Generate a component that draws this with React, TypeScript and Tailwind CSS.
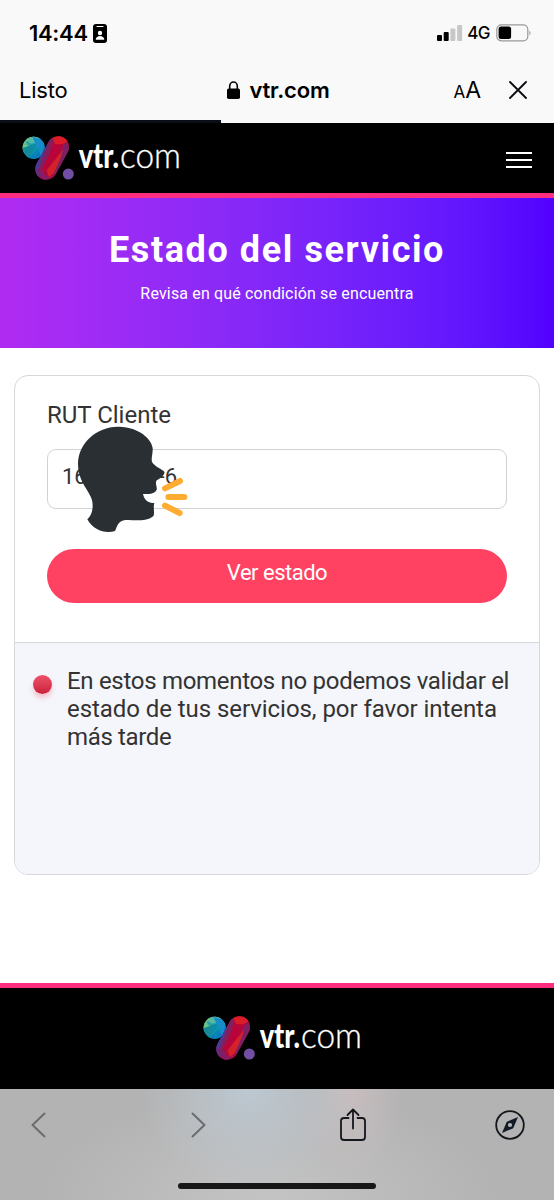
import { useId, type FC } from "react";

const Logo: FC = () => {
  const id = useId();
  return (
    <svg viewBox="60 50 489 141" className="h-[47px] w-[163px]">
      <defs>
        <clipPath id={`${id}-ball`}>
          <circle cx="101" cy="88" r="33" />
        </clipPath>
        <clipPath id={`${id}-pill`}>
          <rect x="124" y="49" width="65" height="140" rx="32.5" transform="rotate(29 156.5 119)" />
        </clipPath>
      </defs>
      <g clipPath={`url(#${id}-ball)`}>
        <path d="M60 50h90v80H60z" fill="#16a6c4" />
        <path d="M60 50h48L84 91 60 104z" fill="#79c77b" />
        <path d="M96 50 70 82 108 72 124 55z" fill="#55b9a0" />
        <path d="M66 90 118 72 84 124z" fill="#148b9b" />
        <path d="m84 121 50-53 4 42-25 18z" fill="#087abf" />
        <path d="m97 55 28 62 10-50z" fill="#168cc8" />
        <path d="m75 66 46 25-18 28z" fill="#078fab" opacity=".6" />
      </g>
      <g clipPath={`url(#${id}-pill)`}>
        <path d="M95 45h125v150H95z" fill="#b00a3f" />
        <path d="M95 190V100l52-50 12 12-47 128z" fill="#5a2f86" />
        <path d="m128 72 18-14 2 26-34 70-10-8z" fill="#4b3a94" />
        <path d="m150 58 12 2-36 118-14-18z" fill="#82205f" />
        <path d="m152 50 42-4 12 22-36 18z" fill="#dc1c26" />
        <path d="m164 78 22 0-26 84-36-8z" fill="#b90439" />
        <path d="m196 72 14 12-4 26-40 66-8-26z" fill="#7c1f63" />
        <path d="m190 92-8 26-20 46-16 12-6-20z" fill="#d3222a" />
        <path d="m112 158 40 20-22 12z" fill="#7a2070" opacity=".8" />
      </g>
      <circle cx="205" cy="167" r="16.5" fill="#714da3" />
      <text y="150" className="fill-white font-[Lato,sans-serif]">
        <tspan x="236" textLength="121" lengthAdjust="spacingAndGlyphs" className="text-[100px] font-black">
          vtr.
        </tspan>
        <tspan
          x="360"
          textLength="183"
          lengthAdjust="spacingAndGlyphs"
          className="stroke-white stroke-[1] text-[104px] font-light">
          com
        </tspan>
      </text>
    </svg>
  );
};

const StatusBar: FC = () => (
  <div className="flex h-[66px] items-center justify-between pr-[22px] pl-[29px]">
    <div className="flex items-center gap-[5px]">
      <span className="text-[22px] font-semibold tracking-[-0.3px]">14:44</span>
      <svg viewBox="0 0 14 19" className="h-[19px] w-[14px]">
        <rect width="14" height="19" rx="3" />
        <path d="M4 2.5h6" stroke="#fff" strokeWidth="1.2" strokeLinecap="round" />
        <circle cx="7" cy="9" r="2.2" fill="#fff" />
        <path d="M2.7 15.7c.3-5 8.3-5 8.6 0z" fill="#fff" />
      </svg>
    </div>
    <div className="flex items-center">
      <svg viewBox="0 0 26 16" className="mr-1 h-4 w-[26px]">
        <rect y="10" width="5" height="6" rx="1" />
        <rect x="6.7" y="7" width="5" height="9" rx="1" />
        <rect x="13.4" y="3.5" width="5" height="12.5" rx="1" fill="#c7c7c7" />
        <rect x="20.1" width="5" height="16" rx="1" fill="#c7c7c7" />
      </svg>
      <span className="mt-[2px] mr-[6px] text-[17px] font-medium tracking-[-0.5px]">4G</span>
      <svg viewBox="0 0 36 18" className="h-[18px] w-9">
        <rect x=".8" y=".8" width="31" height="16" rx="4.5" fill="none" stroke="#999" strokeWidth="1.2" />
        <rect x="2.6" y="2.6" width="12.5" height="12.5" rx="2.5" />
        <path d="M33.5 6.5q2 2.5 0 5z" fill="#888" />
      </svg>
    </div>
  </div>
);

const AddressBar: FC = () => (
  <div className="relative grid h-[57px] grid-cols-[1fr_auto_1fr] items-center pr-[27px] pb-[9px] pl-[19px]">
    <span className="text-[22px] tracking-[-0.2px]">Listo</span>
    <div className="ml-[11px] flex items-center gap-[9px]">
      <svg viewBox="0 0 13 18" className="h-[18px] w-[13px]">
        <rect y="7.5" width="13" height="10.5" rx="1.8" />
        <path d="M2.7 8V5.2a3.8 4.2 0 0 1 7.6 0V8" fill="none" stroke="#000" strokeWidth="1.6" />
      </svg>
      <span className="text-[22px] font-semibold tracking-[-0.2px]">vtr.com</span>
    </div>
    <div className="flex items-center justify-end gap-[28px]">
      <span className="flex items-baseline">
        <span className="text-[17px]">A</span>
        <span className="text-[23px]">A</span>
      </span>
      <svg viewBox="0 0 18 18" className="size-[18px]">
        <path d="m1 1 16 16M17 1 1 17" stroke="#0a0a10" strokeWidth="1.8" strokeLinecap="round" />
      </svg>
    </div>
    <div className="absolute bottom-0 left-0 h-[3px] w-[221px] bg-[#0b0d18]" />
  </div>
);

const SpeakingHead: FC = () => (
  <svg viewBox="228 180 342 330" className="absolute top-[49px] left-[61px] h-[110px] w-[114px]">
    <path
      d="M357 185C419 187 454 222 458 249C459 265 453 277 456 291C465 305 484 312 492 319Q496 325 488 333C481 342 474 342 469 347C465 358 472 365 470 374C464 386 447 388 429 387C434 410 451 415 463 414C459 427 464 440 461 452C449 463 435 465 417 466C393 467 370 460 357 474C349 483 349 492 345 498C317 508 279 495 262 463C276 451 280 430 277 410C271 376 234 355 234 294C236 233 292 183 357 185Z"
      fill="#292f33"
    />
    <path d="m495 370 45-22M505 396h48M495 422l44 22" fill="none" stroke="#ffac33" strokeWidth="18" strokeLinecap="round" />
  </svg>
);

const ServiceCard: FC = () => (
  <section className="relative mx-[14px] mt-[27px] flex h-[500px] flex-col overflow-hidden rounded-[14px] border border-[#d5d7dc] bg-white text-[#333]">
    <div className="flex h-[267px] flex-col border-b border-[#d5d7dc] px-8 pt-[23px]">
      <label className="h-[50px] text-[24px] leading-[32px]">RUT Cliente</label>
      <div className="flex h-[60px] shrink-0 items-center justify-between rounded-[9px] border border-[#d0d2d5] pr-[329px] pb-[6px] pl-[14px] text-[22px]">
        <span>16</span>
        <span>-6</span>
      </div>
      <button className="mt-10 h-[54px] shrink-0 rounded-full bg-[#ff4262] pb-[7px] text-[22px] tracking-[-0.5px] text-white">
        Ver estado
      </button>
    </div>
    <div className="flex flex-1 gap-[15px] bg-[#f5f6fb] pt-[24px] pl-[18px]">
      <span className="mt-[8px] size-[19px] shrink-0 rounded-full bg-linear-to-b from-[#f05268] to-[#c81e3d] shadow-[0_4px_5px_#ef8f9e80]" />
      <p className="flex flex-col text-[24px] leading-[28px] whitespace-nowrap">
        <span className="tracking-[-0.3px]">En estos momentos no podemos validar el</span>
        <span className="tracking-[-0.06px]">estado de tus servicios, por favor intenta</span>
        <span className="tracking-[-0.35px]">más tarde</span>
      </p>
    </div>
    <SpeakingHead />
  </section>
);

const BottomBar: FC = () => (
  <div className="flex h-[111px] flex-col items-center justify-between bg-[#b3b3b3] bg-[radial-gradient(ellipse_110px_100px_at_250px_0px,#bdc8d1,transparent),radial-gradient(ellipse_55px_90px_at_350px_0px,#c8bdbf,transparent),radial-gradient(ellipse_230px_110px_at_270px_111px,#c4c4c4,transparent)] pb-[11px]">
    <div className="flex h-[72px] w-full items-center pl-[31px]">
      <svg viewBox="0 0 15 26" className="h-[26px] w-[15px]">
        <path d="M13.5 1.5 1.5 13l12 11.5" fill="none" stroke="#6a6c70" strokeWidth="2" strokeLinecap="round" strokeLinejoin="round" />
      </svg>
      <svg viewBox="0 0 15 26" className="ml-[145px] h-[26px] w-[15px]">
        <path d="m1.5 1.5 12 11.5-12 11.5" fill="none" stroke="#6a6c70" strokeWidth="2" strokeLinecap="round" strokeLinejoin="round" />
      </svg>
      <svg viewBox="0 0 26 34" className="mb-[2px] ml-[134px] h-[34px] w-[26px]" fill="none" stroke="#14171c" strokeWidth="1.8" strokeLinecap="round" strokeLinejoin="round">
        <path d="M8.5 11H4a3 3 0 0 0-3 3v16a3 3 0 0 0 3 3h18a3 3 0 0 0 3-3V14a3 3 0 0 0-3-3h-4.5M13 21.5V3M7.500 8 13 2.500 18.500 8" />
      </svg>
      <svg viewBox="0 0 30 30" className="ml-[129px] size-[30px]">
        <circle cx="15" cy="15" r="13.8" fill="none" stroke="#14171c" strokeWidth="1.8" />
        <path fillRule="evenodd" d="M23 7 18.200 18.200 7 23 11.800 11.800zM15 12.900a2.100 2.100 0 1 0 0 4.200 2.100 2.100 0 0 0 0-4.200z" fill="#111b29" />
      </svg>
    </div>
    <div className="h-[6px] w-[198px] rounded-full bg-[#171717]" />
  </div>
);

const App: FC = () => {
  return (
    <div className="flex h-[1200px] w-[554px] flex-col overflow-hidden bg-white font-[Roboto,sans-serif]">
      <div className="bg-[#f9f9f9] font-[Inter,sans-serif] text-black">
        <StatusBar />
        <AddressBar />
      </div>
      <header className="flex h-[75px] shrink-0 items-start justify-between border-b-5 border-[#ff2d80] bg-black pt-[12px] pr-[22px] pl-5">
        <Logo />
        <div className="mt-[17px] flex w-[26px] flex-col gap-[5px]">
          <span className="h-[2px] bg-white" />
          <span className="h-[2px] bg-white" />
          <span className="h-[2px] bg-white" />
        </div>
      </header>
      <div className="flex h-[150px] shrink-0 flex-col items-center bg-linear-to-r from-[#b02bf2] to-[#5200ff] pt-[31px] text-white">
        <h1 className="text-[36px] leading-[42px] font-bold tracking-[1.6px]">Estado del servicio</h1>
        <p className="mt-[13px] text-[16px] leading-[20px] tracking-[0.16px]">
          Revisa en qué condición se encuentra
        </p>
      </div>
      <ServiceCard />
      <footer className="mt-auto flex h-[106px] shrink-0 justify-center border-t-5 border-[#ff2d80] bg-black pt-[27px] pl-[10px]">
        <Logo />
      </footer>
      <BottomBar />
    </div>
  );
};

export default App;
